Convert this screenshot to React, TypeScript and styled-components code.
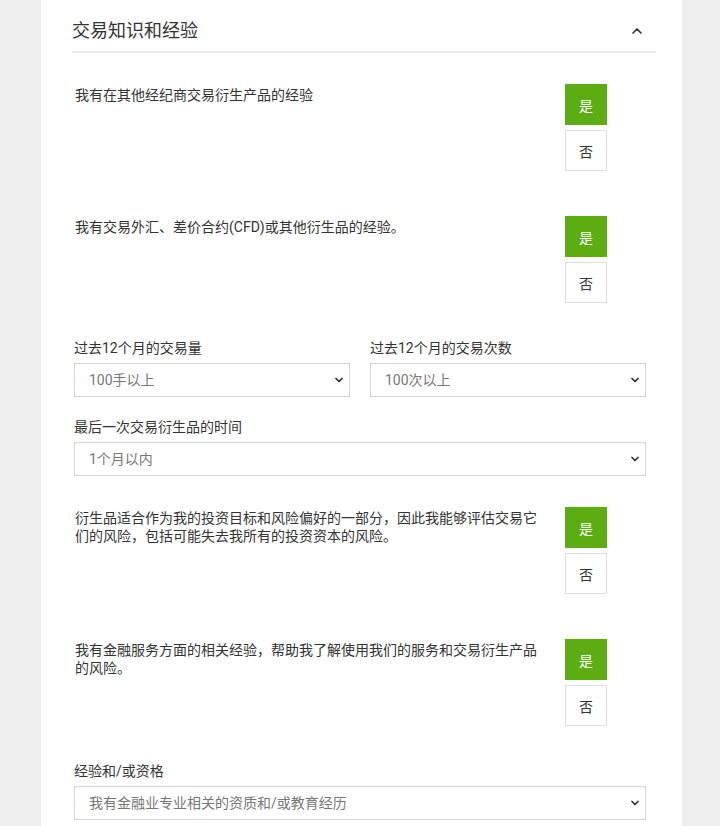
import React from 'react';
import styled, { createGlobalStyle } from 'styled-components';
import { ChevronDown, ChevronUp } from 'lucide-react';

const GlobalStyle = createGlobalStyle`
  html, body {
    margin: 0;
    padding: 0;
    background: #efefef;
    font-family: Roboto, "Noto Sans CJK SC", sans-serif;
  }
`;

const Card = styled.div`
  width: 641px;
  margin-left: 41px;
  min-height: 826px;
  background: #fff;
  box-sizing: border-box;
  padding-bottom: 40px;
`;

const Header = styled.div`
  height: 53px;
  margin: 0 26px 0 31px;
  padding-top: 11px;
  box-sizing: border-box;
  border-bottom: 2px solid #eeeeee;
  display: flex;
  align-items: flex-start;
  justify-content: space-between;
`;

const Title = styled.h2`
  margin: 0;
  font-size: 18px;
  line-height: 40px;
  font-weight: 400;
  color: #333;
`;

const ToggleButton = styled.button`
  border: none;
  background: none;
  padding: 0;
  margin: 12px 11px 0 0;
  width: 16px;
  height: 16px;
  display: flex;
  align-items: center;
  justify-content: center;
  color: #333;
`;

const Body = styled.div`
  padding: 0 36px 0 33px;
`;

const QuestionRow = styled.div<{ top: number }>`
  display: flex;
  justify-content: space-between;
  align-items: flex-start;
  margin-top: ${({ top }) => top}px;
  padding-right: 39px;
`;

const QuestionText = styled.p`
  margin: 2px 0 0 1px;
  width: 470px;
  font-size: 14px;
  line-height: 18px;
  color: #333;
`;

const Choices = styled.div`
  display: flex;
  flex-direction: column;
  gap: 5px;
`;

const Choice = styled.button<{ active?: boolean }>`
  width: 42px;
  height: 41px;
  box-sizing: border-box;
  border: 1px solid ${({ active }) => (active ? '#5bad12' : '#dddddd')};
  background: ${({ active }) => (active ? '#5bad12' : '#fff')};
  color: ${({ active }) => (active ? '#fff' : '#333')};
  font-family: Roboto, "Noto Sans CJK SC", sans-serif;
  font-size: 14px;
  padding: 0;
  cursor: pointer;
`;

const FieldRow = styled.div<{ top: number }>`
  display: grid;
  grid-template-columns: 1fr 1fr;
  column-gap: 20px;
  margin-top: ${({ top }) => top}px;
`;

const Field = styled.div<{ top: number; wide?: boolean }>`
  margin-top: ${({ top }) => top}px;
  grid-column: ${({ wide }) => (wide ? '1 / -1' : 'auto')};
`;

const Label = styled.label`
  display: block;
  font-size: 14px;
  line-height: 18px;
  color: #333;
  margin-bottom: 6px;
`;

const SelectWrap = styled.div`
  position: relative;
`;

const Select = styled.select`
  width: 100%;
  height: 34px;
  appearance: none;
  -webkit-appearance: none;
  border: 1px solid #d6d6d6;
  border-radius: 0;
  background: #fff;
  color: #777;
  font-family: Roboto, "Noto Sans CJK SC", sans-serif;
  font-size: 14px;
  padding: 0 30px 0 14px;
  outline: none;
`;

const SelectIcon = styled.span`
  position: absolute;
  right: 5px;
  top: 11px;
  width: 12px;
  height: 12px;
  display: flex;
  color: #333;
  pointer-events: none;
`;

const Question = ({ text, top }: { text: string; top: number }) => (
  <QuestionRow top={top}>
    <QuestionText>{text}</QuestionText>
    <Choices>
      <Choice active>是</Choice>
      <Choice>否</Choice>
    </Choices>
  </QuestionRow>
);

const Dropdown = ({ value }: { value: string }) => (
  <SelectWrap>
    <Select defaultValue={value}>
      <option>{value}</option>
    </Select>
    <SelectIcon>
      <ChevronDown size={12} strokeWidth={3.5} />
    </SelectIcon>
  </SelectWrap>
);

const App = () => (
  <>
    <GlobalStyle />
    <Card>
      <Header>
        <Title>交易知识和经验</Title>
        <ToggleButton>
          <ChevronUp size={16} strokeWidth={2.5} />
        </ToggleButton>
      </Header>
      <Body>
        <Question top={31} text="我有在其他经纪商交易衍生产品的经验" />
        <Question top={45} text="我有交易外汇、差价合约(CFD)或其他衍生品的经验。" />
        <FieldRow top={36}>
          <Field top={0}>
            <Label>过去12个月的交易量</Label>
            <Dropdown value="100手以上" />
          </Field>
          <Field top={0}>
            <Label>过去12个月的交易次数</Label>
            <Dropdown value="100次以上" />
          </Field>
          <Field top={21} wide>
            <Label>最后一次交易衍生品的时间</Label>
            <Dropdown value="1个月以内" />
          </Field>
        </FieldRow>
        <Question
          top={31}
          text="衍生品适合作为我的投资目标和风险偏好的一部分，因此我能够评估交易它们的风险，包括可能失去我所有的投资资本的风险。"
        />
        <Question
          top={45}
          text="我有金融服务方面的相关经验，帮助我了解使用我们的服务和交易衍生产品的风险。"
        />
        <Field top={36}>
          <Label>经验和/或资格</Label>
          <Dropdown value="我有金融业专业相关的资质和/或教育经历" />
        </Field>
      </Body>
    </Card>
  </>
);

export default App;
